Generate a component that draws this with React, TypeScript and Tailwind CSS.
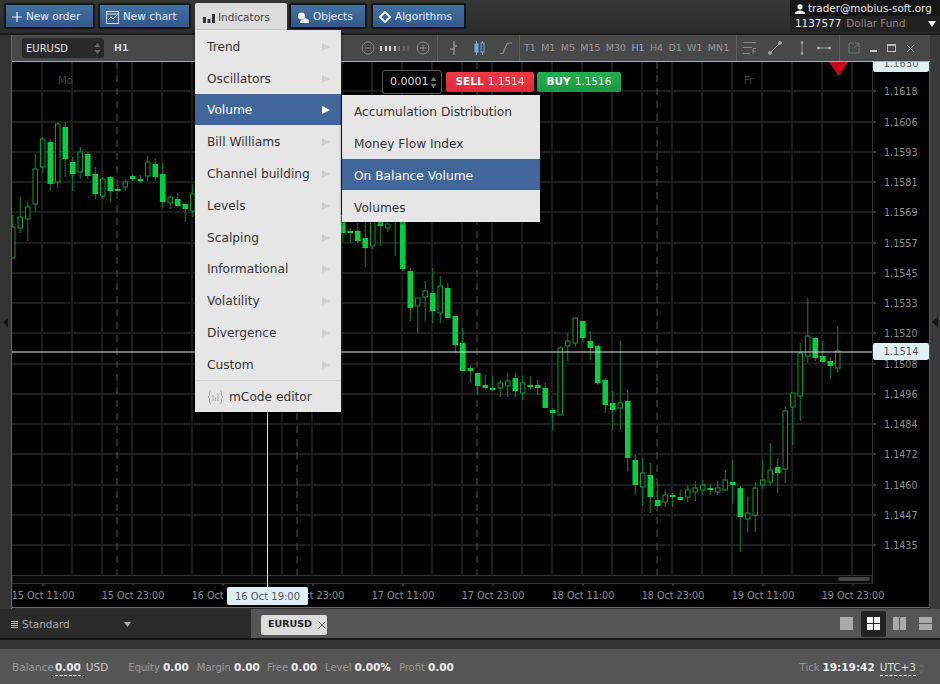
import type { ReactNode } from 'react';

type Candle = [number, number, number, number, number];

// wick top, wick bottom, body top, body bottom, filled
const leftCandles: Candle[] = [
  [215, 258, 227, 258, 0], [197, 233, 217, 228, 0], [202, 241, 207, 219, 0], [154, 212, 169, 204, 0],
  [137, 173, 139, 167, 0], [139, 191, 142, 184, 1], [122, 188, 124, 182, 0], [122, 177, 127, 159, 1],
  [157, 191, 162, 174, 1], [147, 179, 152, 172, 0], [152, 179, 154, 176, 1], [167, 199, 174, 194, 1],
  [177, 199, 179, 196, 0], [176, 202, 177, 191, 1], [185, 191, 189, 190, 1], [179, 191, 182, 187, 0],
  [174, 181, 176, 179, 1], [175, 183, 179, 180, 1], [156, 181, 162, 176, 0], [159, 181, 164, 177, 1],
  [163, 207, 174, 202, 1], [196, 209, 197, 203, 0], [193, 207, 199, 206, 1], [204, 222, 204, 209, 1],
  [184, 217, 194, 211, 0],
];

const rightCandles: Candle[] = [
  [215, 242, 215, 233, 1], [228, 243, 231, 233, 1], [223, 243, 231, 241, 1], [215, 267, 238, 248, 1],
  [215, 249, 215, 246, 0], [215, 246, 215, 226, 1], [215, 232, 224, 228, 0], [215, 256, 220, 221, 1],
  [215, 271, 215, 269, 1], [268, 321, 271, 308, 1], [298, 333, 298, 306, 0], [281, 321, 291, 297, 0],
  [268, 323, 293, 311, 1], [276, 323, 286, 313, 0], [283, 318, 288, 318, 1], [316, 353, 316, 345, 1],
  [328, 371, 343, 371, 1], [365, 383, 368, 371, 1], [373, 395, 373, 386, 1], [375, 390, 385, 388, 1],
  [376, 391, 388, 390, 1], [380, 397, 383, 388, 0], [373, 397, 381, 386, 0], [373, 397, 378, 391, 1],
  [376, 400, 383, 393, 0], [376, 390, 385, 387, 1], [380, 395, 385, 388, 1], [383, 408, 388, 408, 1],
  [408, 430, 410, 413, 1], [346, 415, 348, 415, 0], [333, 361, 341, 346, 0], [318, 347, 318, 343, 0],
  [321, 343, 321, 338, 1], [331, 360, 341, 348, 1], [345, 385, 346, 383, 1], [378, 413, 380, 405, 1],
  [391, 430, 403, 410, 1], [341, 430, 403, 408, 0], [390, 471, 401, 458, 1], [455, 495, 460, 485, 1],
  [458, 506, 473, 487, 0], [463, 513, 475, 497, 1], [484, 507, 500, 506, 1], [490, 507, 495, 502, 0],
  [493, 507, 495, 497, 1], [490, 500, 497, 500, 1], [485, 502, 490, 497, 0], [481, 501, 488, 492, 0],
  [480, 495, 485, 490, 0], [484, 495, 488, 490, 1], [481, 495, 488, 492, 0], [470, 491, 480, 490, 0],
  [460, 504, 482, 485, 1], [486, 552, 488, 517, 1], [497, 532, 513, 519, 0], [482, 532, 488, 515, 0],
  [460, 489, 480, 485, 0], [443, 486, 470, 482, 0], [458, 493, 467, 473, 1], [406, 483, 411, 469, 0],
  [393, 445, 393, 407, 0], [343, 421, 353, 396, 0], [298, 363, 336, 356, 0], [337, 361, 338, 358, 1],
  [341, 363, 356, 362, 1], [357, 379, 361, 366, 1], [326, 373, 351, 368, 0],
];

const prices = [
  ['1.1618', 91], ['1.1606', 122], ['1.1593', 152], ['1.1581', 182], ['1.1569', 212], ['1.1557', 243],
  ['1.1545', 273], ['1.1533', 303], ['1.1520', 333], ['1.1508', 364], ['1.1496', 394], ['1.1484', 424],
  ['1.1472', 454], ['1.1460', 485], ['1.1447', 515], ['1.1435', 545],
] as const;

const times = [
  ['15 Oct 11:00', 43], ['15 Oct 23:00', 133], ['16 Oct 11:00', 223], ['16 Oct 23:00', 313], ['17 Oct 11:00', 403],
  ['17 Oct 23:00', 493], ['18 Oct 11:00', 583], ['18 Oct 23:00', 673], ['19 Oct 11:00', 763], ['19 Oct 23:00', 853],
] as const;

const gridX = Array.from({ length: 28 }, (_, i) => 42 + i * 30);

function CandleMark({ c, x }: { c: Candle; x: number }) {
  const [wt, wb, bt, bb, filled] = c;
  return (
    <g>
      <line x1={x} x2={x} y1={wt} y2={wb} stroke="#0a8a30" strokeWidth="1" />
      {filled ? (
        <rect x={x - 2.75} y={bt} width={5.5} height={Math.max(bb - bt, 2)} fill="#00d23f" />
      ) : (
        <rect x={x - 2.25} y={bt} width={4.5} height={bb - bt} fill="#000" stroke="#0a9a35" strokeWidth="1" />
      )}
    </g>
  );
}

function Chart() {
  return (
    <svg className="block w-[918px] h-[546px]" viewBox="12 62 918 546">
      <rect x="12" y="62" width="918" height="546" fill="#000" />
      {gridX.map((x) => (
        <line key={x} x1={x} x2={x} y1="62" y2="575" stroke="#262626" strokeWidth="1.5" />
      ))}
      {prices.map(([, y]) => (
        <line key={y} x1="12" x2="872" y1={y} y2={y} stroke="#262626" strokeWidth="1.5" />
      ))}
      {[117, 297, 477, 657].map((x) => (
        <line key={x} x1={x} x2={x} y1="62" y2="575" stroke="#555" strokeWidth="1" strokeDasharray="7 6" />
      ))}
      {leftCandles.map((c, i) => (
        <CandleMark key={i} c={c} x={12.75 + i * 7.5} />
      ))}
      {rightCandles.map((c, i) => (
        <CandleMark key={i} c={c} x={12.75 + (i + 44) * 7.5} />
      ))}
      <text x="58" y="84" fontSize="10" fill="#444">Mo</text>
      <text x="744" y="84" fontSize="10" fill="#444">Fr</text>
      <polygon points="829,62 848,62 838.5,76" fill="#d0021b" />
      {/* scroll strip under the plot */}
      <rect x="12" y="575.5" width="860" height="8" fill="#0b0b0b" stroke="#333" />
      <rect x="838" y="577" width="32" height="4" rx="2" fill="#444" />
      <line x1="872.5" x2="872.5" y1="62" y2="584" stroke="#333" />
      {prices.map(([label, y]) => (
        <g key={label}>
          <line x1="873" x2="876" y1={y} y2={y} stroke="#666" />
          <text x="884" y={y + 4} fontSize="9.6" fill="#8f8f8f">{label}</text>
        </g>
      ))}
      {times.map(([label, x]) => (
        <g key={label}>
          <line x1={x} x2={x} y1="584" y2="586" stroke="#666" />
          <text x={x} y="599" fontSize="9.6" fill="#8f8f8f" textAnchor="middle">{label}</text>
        </g>
      ))}
      <line x1="12" x2="872" y1="352" y2="352" stroke="#e4e4e4" strokeWidth="1" />
      <line x1="267.5" x2="267.5" y1="62" y2="588" stroke="#e4e4e4" strokeWidth="1" />
      <line x1="929.5" x2="929.5" y1="62" y2="608" stroke="#555" />
      <line x1="12" x2="930" y1="607.5" y2="607.5" stroke="#666" />
    </svg>
  );
}

function TopButton({ icon, label, width }: { icon: ReactNode; label: string; width: string }) {
  return (
    <button className={`flex h-[26px] items-center gap-[4px] rounded-[2px] border-2 border-[#141414] bg-gradient-to-b from-[#44719f] to-[#30598d] pl-[6px] pt-[2px] text-[10.5px] text-[#e6edf5] ${width}`}>
      {icon}
      {label}
    </button>
  );
}

function Chevron({ active }: { active?: boolean }) {
  return (
    <svg className="ml-auto" width="8" height="8" viewBox="0 0 8 8">
      <polygon points="0,0 8,4 0,8" fill={active ? '#fff' : '#cfcfcf'} />
    </svg>
  );
}

const menuItems = ['Trend', 'Oscillators', 'Volume', 'Bill Williams', 'Channel building', 'Levels', 'Scalping', 'Informational', 'Volatility', 'Divergence', 'Custom'];
const subItems = ['Accumulation Distribution', 'Money Flow Index', 'On Balance Volume', 'Volumes'];

function IndicatorsMenu() {
  return (
    <div className="absolute left-[195px] top-[30px] w-[146px] bg-[#e6e6e6] shadow-[0_1px_3px_rgba(0,0,0,0.6)]">
      {menuItems.map((item) => (
        <div
          key={item}
          className={`flex h-[31.8px] items-center pl-[12px] pr-[11px] pt-[2px] text-[12.2px] ${item === 'Volume' ? 'bg-[#41669a] text-white' : 'text-[#333]'}`}
        >
          {item}
          <Chevron active={item === 'Volume'} />
        </div>
      ))}
      <div className="flex h-[32px] items-center gap-[5px] border-t border-[#d6d6d6] pl-[12px] pt-[2px] text-[12.2px] text-[#333]">
        <svg width="17" height="16" viewBox="0 0 17 16" fill="none" stroke="#a8a8a8" strokeWidth="1">
          <path d="M4 1.5C2.5 1.5 2.5 2.5 2.5 4v2.5L1 8l1.5 1.5V12c0 1.5 0 2.5 1.5 2.5M13 1.5c1.5 0 1.5 1 1.5 2.5v2.5L16 8l-1.5 1.5V12c0 1.5 0 2.5-1.5 2.5" />
          <path d="M6 6v6M8.5 8.5V12M11 4v8" />
        </svg>
        mCode editor
      </div>
    </div>
  );
}

function VolumeSubmenu() {
  return (
    <div className="absolute left-[342px] top-[95px] w-[198px] bg-[#e6e6e6] shadow-[0_1px_3px_rgba(0,0,0,0.6)]">
      {subItems.map((item) => (
        <div
          key={item}
          className={`flex h-[31.8px] items-center pl-[12px] pt-[3px] text-[12.2px] ${item === 'On Balance Volume' ? 'bg-[#41669a] text-white' : 'text-[#333]'}`}
        >
          {item}
        </div>
      ))}
    </div>
  );
}

function Spinner({ color = '#777' }: { color?: string }) {
  return (
    <svg width="7" height="13" viewBox="0 0 7 13">
      <polygon points="3.5,1 6.5,5 0.5,5" fill={color} />
      <polygon points="3.5,12 6.5,8 0.5,8" fill={color} />
    </svg>
  );
}

function OrderOverlay() {
  return (
    <div className="absolute left-[382px] top-[70px] flex items-center">
      <div className="flex h-[24px] w-[60px] items-center justify-between rounded-[3px] border border-[#5a5a5a] bg-black pl-[7px] pr-[4px] pt-px text-[11px] text-[#ddd]">
        0.0001
        <Spinner />
      </div>
      <button className="ml-[4px] flex h-[20px] w-[88px] items-center justify-center gap-[4px] rounded-[2px] bg-gradient-to-b from-[#f03a44] to-[#e0283a] text-[10.5px] text-[#fde8e8]">
        <b className="text-white">SELL</b> 1.1514
      </button>
      <button className="ml-[3px] flex h-[20px] w-[84px] items-center justify-center gap-[4px] rounded-[2px] bg-gradient-to-b from-[#25ad50] to-[#189a40] text-[10.5px] text-[#e6f7ea]">
        <b className="text-white">BUY</b> 1.1516
      </button>
    </div>
  );
}

function Divider({ ml, mr }: { ml: string; mr: string }) {
  return <span className={`h-[26px] w-px shrink-0 bg-[#5c5c5c] ${ml} ${mr}`} />;
}

const frames = ['T1', 'M1', 'M5', 'M15', 'M30', 'H1', 'H4', 'D1', 'W1', 'MN1'];

function ChartToolbar() {
  return (
    <div className="flex h-[27px] items-center border-b border-[#9fb4bb] bg-[#484848] text-[#999]">
      <div className="ml-[10px] flex h-[20px] w-[82px] shrink-0 items-center justify-between rounded-[3px] bg-[#292929] pl-[4px] pr-[3px] text-[10px] text-[#e6e6e6]">
        EURUSD
        <Spinner color="#666" />
      </div>
      <span className="ml-[10px] w-[14px] shrink-0 text-[9.5px] font-bold text-[#d8d8d8]">H1</span>
      <svg className="ml-[233px] shrink-0" width="14" height="14" viewBox="0 0 14 14" fill="none" stroke="#8a8a8a">
        <circle cx="7" cy="7" r="6" />
        <path d="M4 7h6" />
      </svg>
      <div className="ml-[5px] flex items-center gap-[2.5px]">
        {['#ddd', '#ddd', '#ddd', '#ccc', '#777', '#666', '#555'].map((c, i) => (
          <span key={i} className="h-[5px] w-[2px]" style={{ backgroundColor: c }} />
        ))}
      </div>
      <svg className="ml-[7px] shrink-0" width="14" height="14" viewBox="0 0 14 14" fill="none" stroke="#8a8a8a">
        <circle cx="7" cy="7" r="6" />
        <path d="M4 7h6M7 4v6" />
      </svg>
      <Divider ml="ml-[7px]" mr="mr-[11px]" />
      <svg className="shrink-0" width="10" height="16" viewBox="0 0 10 16" fill="none" stroke="#8f8f8f" strokeWidth="1.5">
        <path d="M5 1v14M1 9h4M5 6h3" />
      </svg>
      <svg className="ml-[14.5px] shrink-0" width="11" height="16" viewBox="0 0 11 16" fill="#6fa8dc" stroke="#6fa8dc">
        <path d="M2.5 1v14M8.5 1v14" strokeWidth="1" />
        <rect x="1" y="4" width="3" height="8" />
        <rect x="7" y="3" width="3" height="9" fill="#484848" />
      </svg>
      <svg className="ml-[14.5px] shrink-0" width="14" height="14" viewBox="0 0 14 14" fill="none" stroke="#8f8f8f" strokeWidth="1.2">
        <path d="M1 13l3-1 4-9 2-1h3" />
      </svg>
      <Divider ml="ml-[6px]" mr="mr-[4px]" />
      <div className="flex shrink-0 gap-[5.3px] text-[9.5px]">
        {frames.map((f) => (
          <span key={f} className={f === 'H1' ? 'text-[#7fb2e5]' : ''}>{f}</span>
        ))}
      </div>
      <Divider ml="ml-[7px]" mr="mr-[6px]" />
      <svg className="shrink-0" width="14" height="14" viewBox="0 0 14 14" fill="none" stroke="#888">
        <path d="M0 1.5h13M0 6.5h9M0 12.5h7" />
        <path d="M10 12.5V7.5h3M10 10h2.500" />
      </svg>
      <svg className="ml-[11px] shrink-0" width="14" height="14" viewBox="0 0 14 14" fill="#aaa" stroke="#999">
        <path d="M2 12L12 2" />
        <circle cx="2" cy="12" r="1.5" />
        <circle cx="12" cy="2" r="1.5" />
      </svg>
      <svg className="ml-[17px] shrink-0" width="6" height="14" viewBox="0 0 6 14" fill="#bbb" stroke="#999">
        <path d="M3 2v10" />
        <circle cx="3" cy="1.5" r="1" />
        <circle cx="3" cy="12.5" r="1" />
      </svg>
      <svg className="ml-[12px] shrink-0" width="14" height="6" viewBox="0 0 14 6" fill="#ccc" stroke="#aaa">
        <path d="M2 3h10" />
        <circle cx="1.5" cy="3" r="1" />
        <circle cx="12.5" cy="3" r="1" />
      </svg>
      <Divider ml="ml-[8px]" mr="mr-[8px]" />
      <svg className="shrink-0" width="12" height="12" viewBox="0 0 12 12" fill="none" stroke="#777">
        <path d="M6 1H1v10h10V6M7 1h4v4M11 1L6 6" />
      </svg>
      <span className="ml-[9.5px] mt-[6px] h-[2px] w-[7px] shrink-0 bg-[#ccc]" />
      <span className="ml-[10px] h-[8px] w-[9px] shrink-0 border border-t-2 border-[#bbb]" />
      <svg className="ml-[10px] shrink-0" width="9" height="9" viewBox="0 0 9 9" stroke="#999">
        <path d="M1 1l7 7M8 1L1 8" />
      </svg>
    </div>
  );
}

function Stat({ label, value, className }: { label: string; value: string; className: string }) {
  return (
    <span className={`flex items-baseline gap-[3px] ${className}`}>
      <span className="text-[10px] text-[#999]">{label}</span>
      <b className="text-[#eee]">{value}</b>
    </span>
  );
}

function LayoutButtons() {
  return (
    <div className="ml-auto flex items-center">
      <span className="h-[13px] w-[13px] bg-[#aaa]" />
      <span className="ml-[8px] grid h-[26px] w-[25px] grid-cols-[6px_6px] grid-rows-[6px_6px] place-content-center gap-[1px] rounded-[2px] bg-[#222]">
        <i className="bg-white" />
        <i className="bg-white" />
        <i className="bg-white" />
        <i className="bg-white" />
      </span>
      <span className="ml-[7px] flex gap-[1px]">
        <i className="h-[13px] w-[6px] bg-[#aaa]" />
        <i className="h-[13px] w-[6px] bg-[#aaa]" />
      </span>
      <span className="ml-[13px] mr-[8px] flex flex-col gap-[1px]">
        <i className="h-[6px] w-[13px] bg-[#aaa]" />
        <i className="h-[6px] w-[13px] bg-[#aaa]" />
      </span>
    </div>
  );
}

export default function App() {
  return (
    <div className="relative flex h-[684px] w-[940px] flex-col overflow-hidden bg-[#2d2d2d] font-['DejaVu_Sans',sans-serif]">
      <header className="flex h-[35px] shrink-0 border-b-2 border-[#1c1c1c] bg-gradient-to-b from-[#363636] to-[#2c2c2c]">
        <div className="flex pl-[4px] pt-[3px]">
          <TopButton
            width="w-[91px]"
            label="New order"
            icon={
              <svg width="10" height="10" viewBox="0 0 10 10" stroke="#e6edf5" strokeWidth="1.2">
                <path d="M5 0v10M0 5h10" />
              </svg>
            }
          />
          <div className="ml-[3px]">
            <TopButton
              width="w-[93px]"
              label="New chart"
              icon={
                <svg width="13" height="13" viewBox="0 0 13 13" fill="none" stroke="#cfdbe8">
                  <rect x="0.5" y="0.5" width="12" height="12" />
                  <path d="M0 3h13M2 9l3-3 2 2 4-4" />
                </svg>
              }
            />
          </div>
          <div className="ml-[4px] flex h-[27px] w-[92px] items-center gap-[3px] rounded-t-[2px] bg-[#dcdcdc] pl-[8px] pt-[2px] text-[10.5px] text-[#444]">
            <svg width="12" height="10" viewBox="0 0 12 10" fill="#333">
              <rect x="0" y="4" width="3" height="6" />
              <rect x="4.5" y="6" width="3" height="4" />
              <rect x="9" y="1" width="3" height="9" />
            </svg>
            Indicators
          </div>
          <div className="ml-[2px]">
            <TopButton
              width="w-[78px]"
              label="Objects"
              icon={
                <svg width="12" height="11" viewBox="0 0 12 11" fill="#f2f2f2">
                  <circle cx="4.5" cy="4" r="3.5" />
                  <path d="M3 9l5-3 4 2v3H3z" />
                </svg>
              }
            />
          </div>
          <div className="ml-[4px]">
            <TopButton
              width="w-[95px]"
              label="Algorithms"
              icon={
                <svg width="12" height="12" viewBox="0 0 12 12" fill="none" stroke="#f2f2f2" strokeWidth="2">
                  <path d="M6 1l5 5-5 5-5-5z" />
                </svg>
              }
            />
          </div>
        </div>
        <div className="ml-auto flex h-[32px] w-[150px] flex-col text-[10.4px]">
          <div className="flex h-[16px] items-center gap-[3px] bg-[#151515] pl-[5px] pt-px text-[#eee]">
            <svg width="10" height="10" viewBox="0 0 10 10" fill="#f5f5f5">
              <circle cx="5" cy="2.8" r="2.6" />
              <path d="M0 10V8.5L3.5 6.5h3L10 8.5V10z" />
            </svg>
            trader@mobius-soft.org
          </div>
          <div className="flex h-[16px] items-center bg-[#222] pl-[5px]">
            <span className="text-[#eee]">1137577</span>
            <span className="ml-[5px] text-[#888]">Dollar Fund</span>
            <svg className="ml-auto mr-[4px]" width="8" height="6" viewBox="0 0 8 6" fill="#eee">
              <polygon points="0,0 8,0 4,6" />
            </svg>
          </div>
        </div>
      </header>

      <div className="flex shrink-0">
        <div className="flex h-[574px] w-[12px] shrink-0 items-center border-r border-[#666] bg-[#333]">
          <svg width="5" height="9" viewBox="0 0 5 9" className="ml-[3px]" fill="#111">
            <polygon points="5,0 0,4.5 5,9" />
          </svg>
        </div>
        <div className="w-[918px] shrink-0">
          <ChartToolbar />
          <Chart />
        </div>
        <div className="flex w-[10px] shrink-0 items-center bg-[#3a3a3a]">
          <svg width="6" height="10" viewBox="0 0 6 10" className="ml-[2px]" fill="#111">
            <polygon points="6,0 0,5 6,10" />
          </svg>
        </div>
      </div>

      <div className="flex h-[31px] shrink-0 items-center border-b-2 border-[#171717] bg-[#555]">
        <div className="flex h-full w-[251px] items-center bg-[#2a2a2a] pt-[2px] text-[10.5px] text-[#aaa]">
          <span className="ml-[11px] flex w-[7px] flex-col gap-[1px]">
            <i className="h-px bg-[#bbb]" />
            <i className="h-px bg-[#bbb]" />
            <i className="h-px bg-[#bbb]" />
            <i className="h-px bg-[#bbb]" />
          </span>
          <span className="ml-[4px]">Standard</span>
          <svg className="ml-[54px]" width="7" height="5" viewBox="0 0 7 5" fill="#aaa">
            <polygon points="0,0 7,0 3.5,5" />
          </svg>
        </div>
        <div className="ml-[10px] mt-[2px] flex h-[20px] w-[66px] items-center gap-[6px] rounded-[2px] bg-[#dcdcdc] pl-[7px] text-[9.5px] font-bold text-[#222]">
          EURUSD
          <svg width="8" height="8" viewBox="0 0 8 8" stroke="#666">
            <path d="M0.5 0.5l7 7M7.5 0.5l-7 7" />
          </svg>
        </div>
        <LayoutButtons />
      </div>

      <div className="h-[9px] shrink-0 bg-[#333]" />

      <footer className="flex h-[35px] shrink-0 items-center bg-[#555] pl-[12px] pt-[3px] text-[10.5px]">
        <span className="text-[#999]">Balance</span>
        <b className="ml-[1px] border-b border-dashed border-white text-[#eee]">0.00</b>
        <span className="ml-[5px] text-[#ccc]">USD</span>
        <Stat label="Equity" value="0.00" className="ml-[20px]" />
        <Stat label="Margin" value="0.00" className="ml-[8px]" />
        <Stat label="Free" value="0.00" className="ml-[7px]" />
        <Stat label="Level" value="0.00%" className="ml-[8px]" />
        <Stat label="Profit" value="0.00" className="ml-[8px]" />
        <Stat label="Tick" value="19:19:42" className="ml-auto" />
        <span className="ml-[5px] border-b border-dashed border-white text-[#ddd]">UTC+3</span>
        <span className="ml-[2px] mr-[15px]">
          <Spinner color="#666" />
        </span>
      </footer>

      <IndicatorsMenu />
      <VolumeSubmenu />
      <OrderOverlay />
      <div className="absolute left-[873px] top-[62px] h-[10px] w-[56px] overflow-hidden rounded-b-[2px] bg-[#dff0f5] text-center text-[10px] leading-[4px] text-[#666]">
        1.1630
      </div>
      <div className="absolute left-[873px] top-[343px] flex h-[17px] w-[56px] items-center justify-center rounded-[2px] bg-[#dff0f5] text-[10px] text-[#555]">
        1.1514
      </div>
      <div className="absolute left-[227px] top-[587px] flex h-[18px] w-[81px] items-center justify-center rounded-[2px] bg-[#dff0f5] text-[10px] text-[#555]">
        16 Oct 19:00
      </div>
    </div>
  );
}
